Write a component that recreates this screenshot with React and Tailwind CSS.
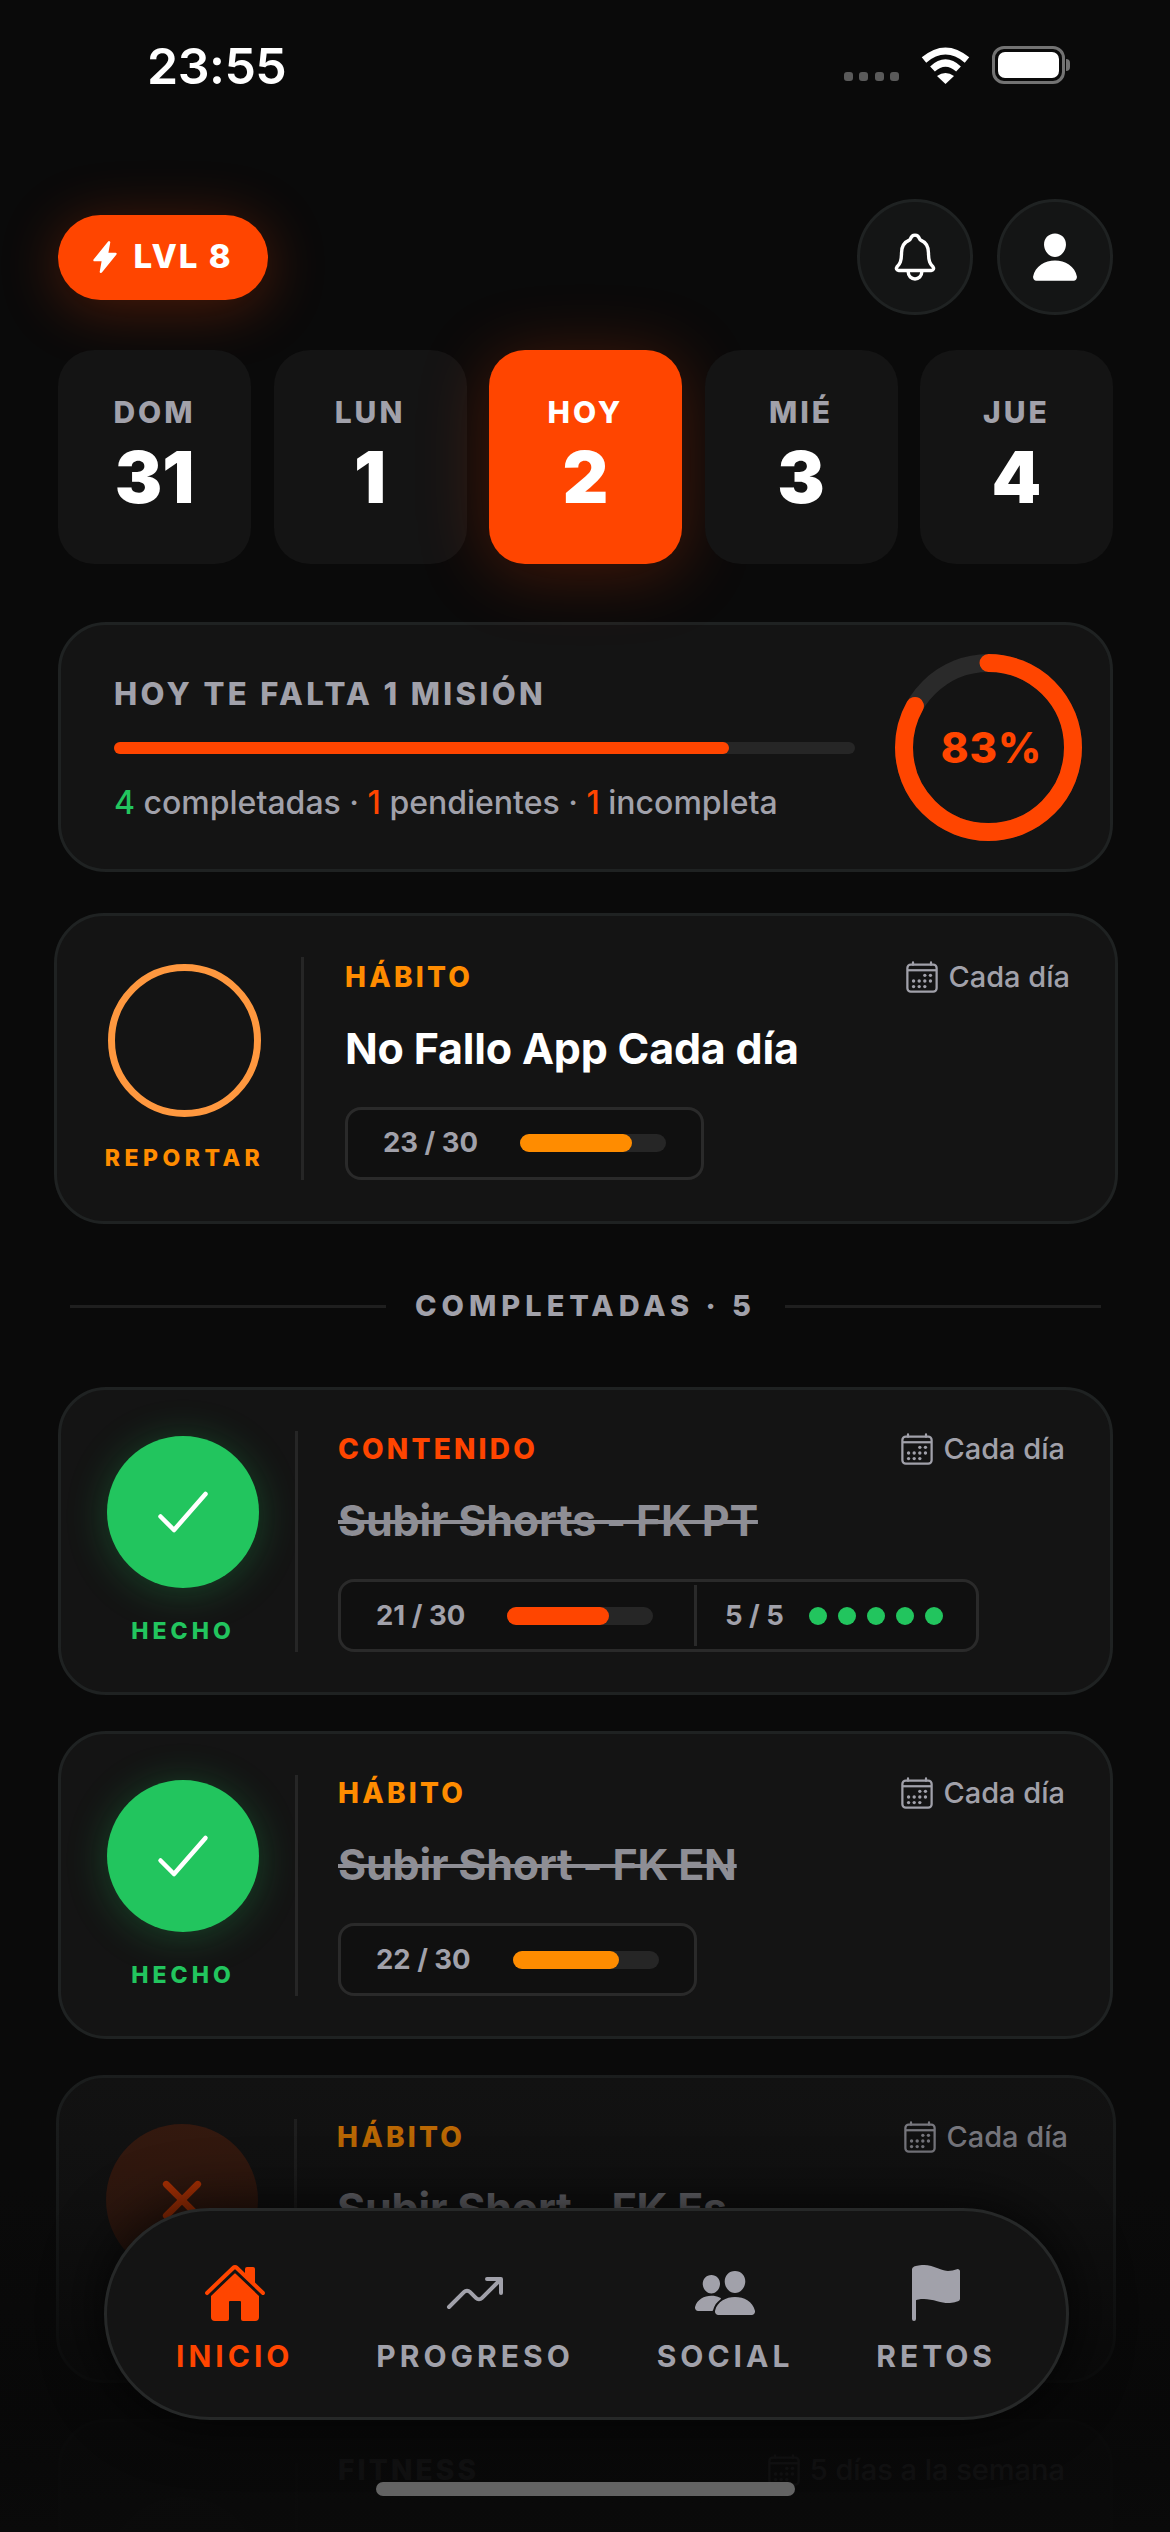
import { IoCalendarOutline, IoCheckmark, IoClose, IoFlag, IoFlash, IoHome, IoNotificationsOutline, IoPeople, IoPerson, IoTrendingUp } from "react-icons/io5";

const days = [
  { label: "DOM", num: "31" },
  { label: "LUN", num: "1" },
  { label: "HOY", num: "2", active: true },
  { label: "MIÉ", num: "3" },
  { label: "JUE", num: "4" },
];

const navItems = [
  { label: "INICIO", Icon: IoHome, active: true },
  { label: "PROGRESO", Icon: IoTrendingUp },
  { label: "SOCIAL", Icon: IoPeople },
  { label: "RETOS", Icon: IoFlag },
];

function StatusBar() {
  return (
    <div className="flex h-[130px] items-center justify-between pl-[147px] pr-[100px]">
      <span className="mt-[2px] text-[50px] font-semibold leading-none tracking-[-0.5px] text-white">23:55</span>
      <div className="flex items-center">
        <div className="mt-[22px] flex gap-[6.5px]">
          {[0, 1, 2, 3].map((dot) => (
            <span key={dot} className="h-[9px] w-[9px] rounded-[3px] bg-[#5a5a5a]" />
          ))}
        </div>
        <svg viewBox="0 0 49 37" className="ml-[22px] h-[37px] w-[49px]" fill="none">
          <path d="M3 13Q24.500 -5 46 13" stroke="white" strokeWidth="7" />
          <path d="M11.500 22Q24.500 10 37.500 22" stroke="white" strokeWidth="7" />
          <path d="M24.500 37L16 29Q24.500 23 33 29Z" fill="white" />
        </svg>
        <div className="ml-[22px] flex items-center">
          <div className="flex h-[38px] w-[73px] rounded-[12px] border-[3px] border-[#737373] p-[3px]">
            <div className="flex-1 rounded-[7px] bg-white" />
          </div>
          <div className="ml-[1px] h-[12px] w-[4px] rounded-r-full bg-[#737373]" />
        </div>
      </div>
    </div>
  );
}

function TopRow() {
  return (
    <div className="flex h-[116px] items-center justify-between">
      <div className="flex h-[85px] w-[210px] items-center justify-center gap-[11px] rounded-full bg-[#ff4500] pr-[2px] shadow-[0_8px_60px_rgba(255,69,0,0.28)]">
        <IoFlash className="-ml-[3px] text-[34px] text-white" />
        <span className="text-[33px] font-extrabold tracking-[2px] text-white">LVL 8</span>
      </div>
      <div className="flex gap-[24px]">
        <div className="flex h-[116px] w-[116px] items-center justify-center rounded-full border-[3px] border-[#1f2222] bg-[#141515]">
          <IoNotificationsOutline className="text-[54px] text-white" />
        </div>
        <div className="flex h-[116px] w-[116px] items-center justify-center rounded-full border-[3px] border-[#1f2222] bg-[#141515]">
          <IoPerson className="text-[54px] text-white" />
        </div>
      </div>
    </div>
  );
}

function DayCard({ label, num, active }) {
  return (
    <div className={`flex h-[214px] w-[193px] flex-col items-center rounded-[36px] pt-[43px] ${active ? "bg-[#ff4500] shadow-[0_8px_70px_rgba(255,69,0,0.25)]" : "bg-[#141414]"}`}>
      <span className={`text-[30px] font-extrabold leading-[38px] tracking-[3px] ${active ? "text-white" : "text-[#a1a1aa]"}`}>{label}</span>
      <span className="mt-[4px] text-[71px] font-black leading-[84px] text-white">{num}</span>
    </div>
  );
}

function Summary() {
  return (
    <div className="mt-[58px] flex h-[250px] items-center rounded-[48px] border-[3px] border-[#1f2222] bg-[#141414] pl-[53px] pr-[28px]">
      <div className="w-[741px] pt-[3px]">
        <div className="text-[31px] font-extrabold leading-[40px] tracking-[3.400px] text-[#a1a1aa]">HOY TE FALTA 1 MISIÓN</div>
        <div className="mt-[28px] h-[12px] rounded-full bg-[#262626]">
          <div className="h-full rounded-full bg-[#ff4500]" style={{ width: "83%" }} />
        </div>
        <div className="mt-[29px] whitespace-nowrap text-[32px] font-medium leading-[40px] text-[#a1a1aa]">
          <span className="text-[#22c55e]">4</span> completadas · <span className="text-[#ff4500]">1</span> pendientes · <span className="text-[#ff4500]">1</span> incompleta
        </div>
      </div>
      <div className="relative ml-[40px] h-[187px] w-[187px]">
        <svg viewBox="0 0 187 187" className="h-full w-full -rotate-90" fill="none">
          <circle cx="93.500" cy="93.500" r="84.500" stroke="#2a2a2a" strokeWidth="18" />
          <circle cx="93.500" cy="93.500" r="84.500" stroke="#ff4500" strokeWidth="18" strokeLinecap="round" strokeDasharray="441 531" />
        </svg>
        <div className="absolute inset-0 flex items-center justify-center pl-[6px] text-[42px] font-extrabold tracking-[1px] text-[#ff4500]">83%</div>
      </div>
    </div>
  );
}

function Bar({ value, color }) {
  return (
    <div className="h-[18px] w-[146px] shrink-0 rounded-full bg-[#262626]">
      <div className={`h-full rounded-full ${color}`} style={{ width: `${value}%` }} />
    </div>
  );
}

function Frequency({ text = "Cada día" }) {
  return (
    <div className="flex items-center gap-[8px] text-[#a1a1aa]">
      <IoCalendarOutline className="text-[36px]" />
      <span className="text-[29px] font-medium leading-[36px]">{text}</span>
    </div>
  );
}

function Stats({ count, value, color, streak }) {
  return (
    <div className="mt-[31px] flex h-[73px] w-fit items-stretch rounded-[16px] border-[3px] border-[#2a2a2a] bg-[#101010]">
      <div className="flex min-w-[353px] items-center gap-[42px] pl-[35px] pr-[35px]">
        <span className="whitespace-nowrap text-[27.500px] font-bold text-[#a1a1aa]">{count}</span>
        <Bar value={value} color={color} />
      </div>
      {streak && (
        <div className="my-[3px] flex items-center gap-[25px] border-l-[3px] border-[#2a2a2a] pl-[28px] pr-[33px]">
          <span className="text-[27.500px] font-bold text-[#a1a1aa]">{streak}</span>
          <div className="flex gap-[11px]">
            {[0, 1, 2, 3, 4].map((dot) => (
              <span key={dot} className="h-[18px] w-[18px] rounded-full bg-[#22c55e]" />
            ))}
          </div>
        </div>
      )}
    </div>
  );
}

function CardBody({ tag, tagColor, title, titleClass, children }) {
  return (
    <div className="h-[222px] flex-1">
      <div className="flex items-center justify-between pt-[1px]">
        <span className={`text-[28px] font-extrabold leading-[36px] tracking-[3.200px] ${tagColor}`}>{tag}</span>
        <Frequency />
      </div>
      <div className={`mt-[25px] text-[43px] font-bold leading-[56px] tracking-[-0.2px] ${titleClass}`}>{title}</div>
      {children}
    </div>
  );
}

function DoneCard({ tag, tagColor, title, count, value, barColor, streak }) {
  return (
    <div className="flex h-[308px] items-center rounded-[48px] border-[3px] border-[#1f2222] bg-[#141414] pl-[46px] pr-[45px]">
      <div className="flex w-[152px] flex-col items-center">
        <div className="flex h-[152px] w-[152px] items-center justify-center rounded-full bg-[#22c55e] shadow-[0_4px_40px_rgba(34,197,94,0.28)]">
          <IoCheckmark className="text-[72px] text-white" />
        </div>
        <span className="mt-[28px] text-[23px] font-extrabold leading-[30px] tracking-[4px] text-[#22c55e]">HECHO</span>
      </div>
      <div className="ml-[36px] h-[221px] w-[3px] bg-[#262626]" />
      <div className="ml-[40px] flex-1">
        <CardBody tag={tag} tagColor={tagColor} title={title} titleClass="text-[#8e8e95] line-through">
          <Stats count={count} value={value} color={barColor} streak={streak} />
        </CardBody>
      </div>
    </div>
  );
}

function PendingCard() {
  return (
    <div className="-ml-[4px] -mr-[5px] mt-[41px] flex h-[311px] items-center rounded-[50px] border-[3px] border-[#1f2222] bg-[#141414] pl-[51px] pr-[45px]">
      <div className="flex w-[153px] flex-col items-center">
        <div className="h-[153px] w-[153px] rounded-full border-[7px] border-[#ff983f]" />
        <span className="mt-[26px] text-[23px] font-extrabold leading-[30px] tracking-[4.500px] text-[#ff8c00]">REPORTAR</span>
      </div>
      <div className="ml-[40px] h-[223px] w-[3px] bg-[#262626]" />
      <div className="ml-[41px] flex-1">
        <CardBody tag="HÁBITO" tagColor="text-[#ff8c00]" title="No Fallo App Cada día" titleClass="text-white">
          <Stats count="23 / 30" value={77} color="bg-[#ff8c00]" />
        </CardBody>
      </div>
    </div>
  );
}

function MissedCard() {
  return (
    <div className="-ml-[2px] -mr-[3px] flex h-[308px] items-center rounded-[48px] border-[3px] border-[#1f2222] bg-[#141414] pl-[47px] pr-[45px]">
      <div className="flex w-[152px] flex-col items-center">
        <div className="flex h-[152px] w-[152px] items-center justify-center rounded-full bg-[#ff4500]/20">
          <IoClose className="text-[72px] text-[#ff4500]" />
        </div>
        <span className="mt-[28px] text-[23px] font-extrabold leading-[30px] tracking-[4px] text-[#ff4500]">FALLÓ</span>
      </div>
      <div className="ml-[36px] h-[221px] w-[3px] bg-[#262626]" />
      <div className="ml-[40px] flex-1">
        <CardBody tag="HÁBITO" tagColor="text-[#ff8c00]" title="Subir Short - FK Es" titleClass="text-[#a1a1aa]">
          <Stats count="20 / 30" value={66} color="bg-[#ff8c00]" />
        </CardBody>
      </div>
    </div>
  );
}

function FitnessCard() {
  return (
    <div className="flex h-[308px] items-center rounded-[48px] border-[3px] border-[#1f2222] bg-[#141414] pl-[46px] pr-[45px]">
      <div className="h-[152px] w-[152px] rounded-full bg-[#262626]" />
      <div className="ml-[36px] h-[221px] w-[3px] bg-[#262626]" />
      <div className="ml-[40px] flex flex-1 items-center justify-between self-start pt-[30px]">
        <span className="text-[28px] font-extrabold leading-[36px] tracking-[3.200px] text-[#a1a1aa]">FITNESS</span>
        <Frequency text="5 días a la semana" />
      </div>
    </div>
  );
}

function BottomNav() {
  return (
    <div className="absolute left-[104px] top-[2208px] flex h-[212px] w-[965px] items-start justify-between rounded-[106px] border-[3px] border-[#262828] bg-[#141414] pb-[60px] pl-[69px] pr-[70px] pt-[50px] shadow-[0_0_60px_rgba(0,0,0,0.8)]">
      {navItems.map(({ label, Icon, active }) => (
        <div key={label} className={`flex flex-col items-center ${active ? "text-[#ff4500]" : "text-[#a1a1aa]"}`}>
          <Icon className="text-[64px]" />
          <span className="mt-[13px] text-[30px] font-bold leading-[36px] tracking-[4px]">{label}</span>
        </div>
      ))}
    </div>
  );
}

export default function App() {
  return (
    <div className="relative h-[2532px] w-[1170px] overflow-hidden bg-[#0a0a0a] font-['Inter',sans-serif]">
      <StatusBar />
      <div className="pl-[58px] pr-[57px] pt-[69px]">
        <TopRow />
        <div className="mt-[35px] flex justify-between">
          {days.map((day) => (
            <DayCard key={day.label} {...day} />
          ))}
        </div>
        <Summary />
        <PendingCard />
        <div className="mx-[12px] mb-[66px] mt-[67px] flex h-[30px] items-center gap-[29px]">
          <div className="h-[3px] flex-1 bg-[#1f1f1f]" />
          <span className="text-[29px] font-extrabold tracking-[5px] text-[#a1a1aa]">COMPLETADAS · 5</span>
          <div className="h-[3px] flex-1 bg-[#1f1f1f]" />
        </div>
        <div className="flex flex-col gap-[36px]">
          <DoneCard tag="CONTENIDO" tagColor="text-[#ff4500]" title="Subir Shorts - FK PT" count="21 / 30" value={70} barColor="bg-[#ff4500]" streak="5 / 5" />
          <DoneCard tag="HÁBITO" tagColor="text-[#ff8c00]" title="Subir Short - FK EN" count="22 / 30" value={73} barColor="bg-[#ff8c00]" />
          <MissedCard />
          <FitnessCard />
        </div>
      </div>
      <div className="pointer-events-none absolute inset-x-0 top-[2045px] h-[487px] bg-[linear-gradient(to_bottom,rgba(10,10,10,0.15),rgba(10,10,10,0.38)_30%,rgba(8,8,8,0.93)_75%,rgba(10,10,10,0.97))]" />
      <BottomNav />
      <div className="absolute left-[376px] top-[2482px] h-[14px] w-[419px] rounded-full bg-[#636363]" />
    </div>
  );
}
